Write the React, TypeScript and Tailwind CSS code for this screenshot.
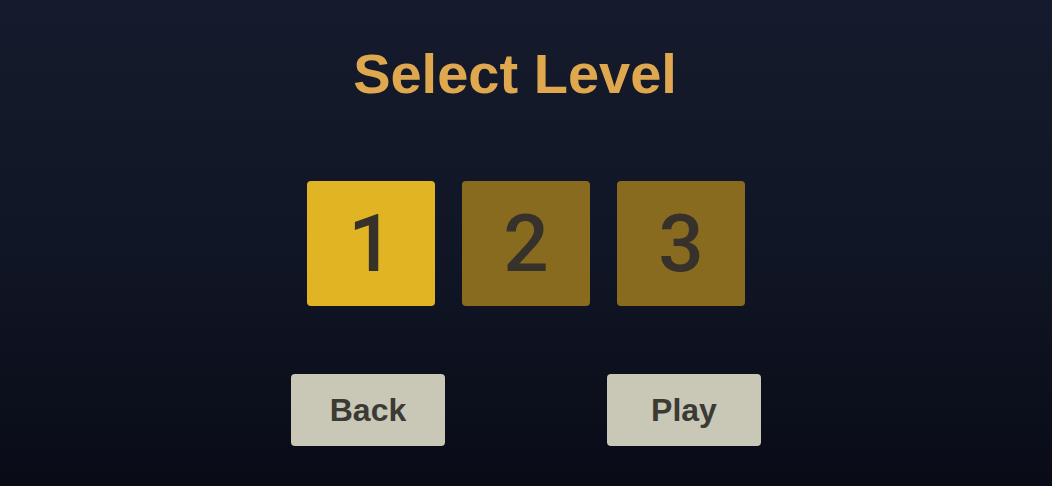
import React from "react";

export default function App() {
  return (
    <div
      className="w-[1052px] h-[486px] overflow-hidden flex flex-col items-center bg-gradient-to-b from-[#151b2c] via-[#111626] to-[#090c17]"
      style={{ fontFamily: "Roboto, 'Liberation Sans', sans-serif" }}
    >
      <h1
        className="mt-[39px] h-[70px] text-[56px] leading-[70px] font-bold text-[#dfa84e] pr-[22px]"
        style={{ fontFamily: "'Liberation Sans', Arial, sans-serif" }}
      >
        Select Level
      </h1>
      <div className="mt-[72px] flex gap-[27px]">
        {["1", "2", "3"].map((n, i) => (
          <div
            key={n}
            className={
              "w-[128px] h-[125px] rounded-[4px] flex items-center justify-center text-[80px] font-medium text-[#36312b] " +
              (i === 0 ? "bg-[#e1b424]" : "bg-[#886b1f]")
            }
          >
            {n}
          </div>
        ))}
      </div>
      <div className="mt-[68px] flex gap-[162px]">
        {["Back", "Play"].map((t) => (
          <div
            key={t}
            className="w-[154px] h-[72px] rounded-[4px] bg-[#c9c7b5] flex items-center justify-center text-[32px] font-bold text-[#3b3a34]"
            style={{ fontFamily: "'Liberation Sans', Arial, sans-serif" }}
          >
            {t}
          </div>
        ))}
      </div>
    </div>
  );
}
